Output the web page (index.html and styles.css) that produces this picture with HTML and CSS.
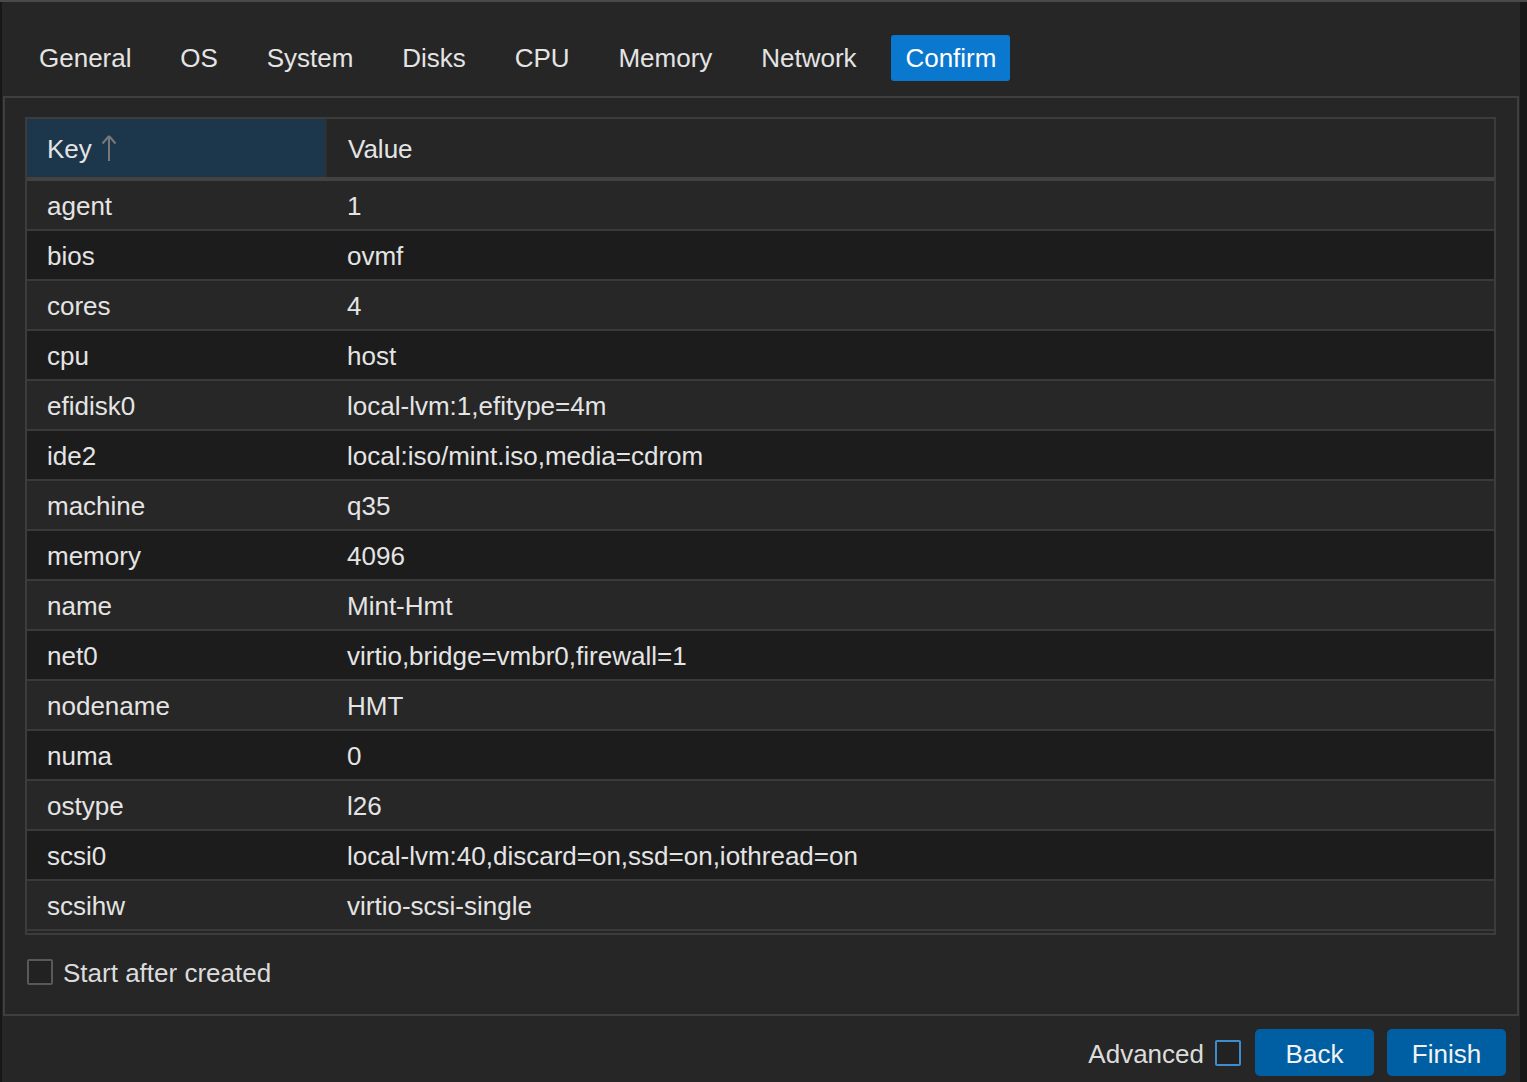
FILE: index.html
```html
<!DOCTYPE html>
<html lang="en">
	<head>
		<meta charset="UTF-8">
		<meta name="viewport" content="width=device-width, initial-scale=1">
		<link rel="stylesheet" href="styles.css">
	</head>

	<body>
		<div class="window">
			<div class="tabs">
				<span class="tab">General</span>
				<span class="tab">OS</span>
				<span class="tab">System</span>
				<span class="tab">Disks</span>
				<span class="tab">CPU</span>
				<span class="tab">Memory</span>
				<span class="tab">Network</span>
				<span class="tab tabActive">Confirm</span>
			</div>

			<div class="panel">
				<div class="grid">
					<div class="gridHead">
						<div class="colKey headKey">Key
							<svg class="sortArrow" width="18" height="28" viewBox="0 0 18 28">
								<path d="M9 2 L9 27 M9 2 L2.5 9.5 M9 2 L15.5 9.5" stroke="#787878" stroke-width="2" fill="none"/>
							</svg>
						</div>
						<div class="colValue headValue">Value</div>
					</div>
					<div class="gridBody">
						<div class="row"><div class="colKey">agent</div><div class="colValue">1</div></div>
						<div class="row rowAlt"><div class="colKey">bios</div><div class="colValue">ovmf</div></div>
						<div class="row"><div class="colKey">cores</div><div class="colValue">4</div></div>
						<div class="row rowAlt"><div class="colKey">cpu</div><div class="colValue">host</div></div>
						<div class="row"><div class="colKey">efidisk0</div><div class="colValue">local-lvm:1,efitype=4m</div></div>
						<div class="row rowAlt"><div class="colKey">ide2</div><div class="colValue">local:iso/mint.iso,media=cdrom</div></div>
						<div class="row"><div class="colKey">machine</div><div class="colValue">q35</div></div>
						<div class="row rowAlt"><div class="colKey">memory</div><div class="colValue">4096</div></div>
						<div class="row"><div class="colKey">name</div><div class="colValue">Mint-Hmt</div></div>
						<div class="row rowAlt"><div class="colKey">net0</div><div class="colValue">virtio,bridge=vmbr0,firewall=1</div></div>
						<div class="row"><div class="colKey">nodename</div><div class="colValue">HMT</div></div>
						<div class="row rowAlt"><div class="colKey">numa</div><div class="colValue">0</div></div>
						<div class="row"><div class="colKey">ostype</div><div class="colValue">l26</div></div>
						<div class="row rowAlt"><div class="colKey">scsi0</div><div class="colValue">local-lvm:40,discard=on,ssd=on,iothread=on</div></div>
						<div class="row"><div class="colKey">scsihw</div><div class="colValue">virtio-scsi-single</div></div>
					</div>
				</div>

				<label class="check">
					<span class="box"></span>
					<span>Start after created</span>
				</label>
			</div>

			<div class="footer">
				<span class="advanced">Advanced</span>
				<span class="box boxBlue"></span>
				<button class="button buttonBack">Back</button>
				<button class="button">Finish</button>
			</div>
		</div>
	</body>
</html>
```

FILE: styles.css
```css
body {
	margin: 0;
	background-color: #171717;
	border-top: 2px solid #4a4a4a;
	font-family: "Liberation Sans", Arial, sans-serif;
	font-size: 26px;
	color: #e4e4e4;
	height: 1080px;
	overflow: hidden;
}

/*---------------------------WINDOW---------------------------*/
.window {
	margin-left: 2px;
	width: 1518px;
	height: 1080px;
	background-color: #262626;
}

.tabs {
	display: flex;
	gap: 20.85px;
	padding: 33px 0 15px 23px;
}

.tab {
	display: inline-block;
	height: 46px;
	line-height: 46px;
	padding: 0 14px;
	border-radius: 3px;
	color: #e4e4e4;
}

.tabActive {
	background-color: #0b78d0; /* Blue */
	color: #ffffff;
}

/*---------------------------PANEL---------------------------*/
.panel {
	margin: 0 1px;
	border: 2px solid #3f3f3f;
	padding: 19px 21px 28px 20px;
}

.grid {
	border: 2px solid #3c3c3c;
	padding-bottom: 2px;
}

.gridHead {
	display: flex;
	height: 58px;
	border-bottom: 4px solid #424242;
}

.colKey {
	width: 279px;
	flex: none;
	padding-left: 20px;
}

.colValue {
	flex: 1;
	padding-left: 21px;
}

.headKey {
	display: flex;
	align-items: center;
	background-color: #1c364b;
	border-right: 2px solid #2f2f2f;
	width: 278px;
	padding-top: 2px;
}

.headValue {
	display: flex;
	align-items: center;
	padding-top: 2px;
}

.sortArrow {
	margin-left: 8px;
	margin-top: -2px;
}

.row {
	display: flex;
	align-items: center;
	height: 45px;
	padding-top: 3px;
	border-bottom: 2px solid #3a3a3a;
	background-color: #272727;
}

.rowAlt {
	background-color: #1c1c1c;
}

/*---------------------------CHECKBOX---------------------------*/
.check {
	display: flex;
	align-items: center;
	height: 28px;
	margin-top: 23px;
	margin-left: 2px;
	gap: 10px;
	color: #dcdcdc;
}

.check span:last-child {
	padding-top: 2px;
}

.box {
	display: inline-block;
	width: 22px;
	height: 22px;
	border: 2px solid #595959;
	border-radius: 2px;
	background-color: #222222;
}

.boxBlue {
	border-color: #3e8ccc;
}

/*---------------------------FOOTER---------------------------*/
.footer {
	display: flex;
	justify-content: flex-end;
	align-items: center;
	padding: 13px 14px 0 0;
}

.advanced {
	color: #dcdcdc;
	margin-right: 11px;
	padding-top: 4px;
}

.button {
	background-color: #005fa3; /* Blue */
	border: none;
	color: #f2f2f2;
	width: 119px;
	height: 47px;
	text-align: center;
	font-family: "Liberation Sans", Arial, sans-serif;
	font-size: 26px;
	border-radius: 5px;
	margin-left: 13px;
	padding: 3px 0 0 0;
	cursor: pointer;
}

.buttonBack {
	margin-left: 14px;
}
```
